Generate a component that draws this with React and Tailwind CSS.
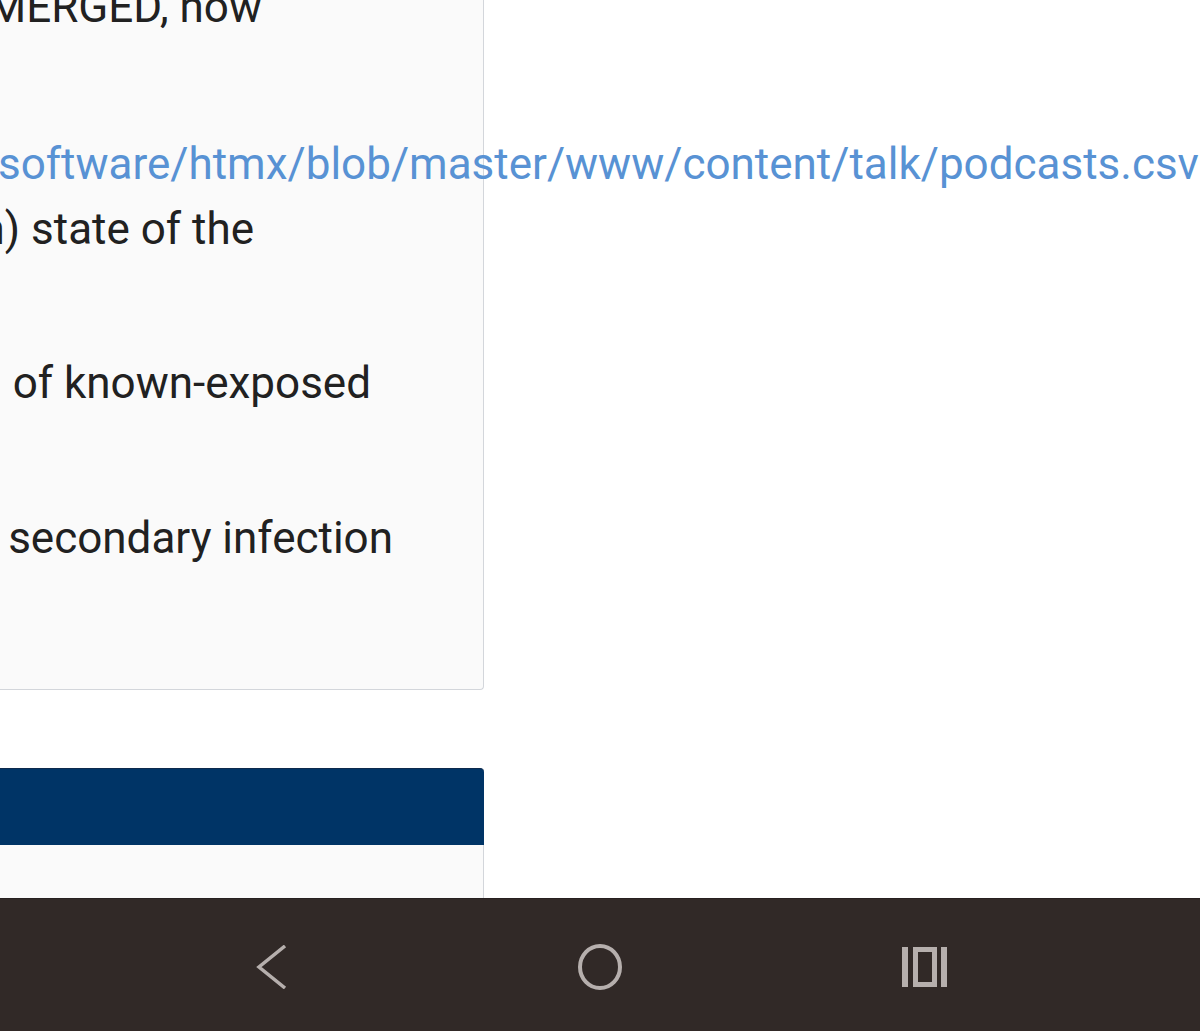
const TextLine = ({ right, top, children, className = "" }) => (
  <div className={`flex justify-end whitespace-nowrap ${className}`} style={{ width: right, marginTop: top }}>
    <span>{children}</span>
  </div>
);

const App = () => {
  return (
    <div className="flex h-[1031px] w-[1200px] flex-col overflow-hidden bg-white font-['Roboto',sans-serif] text-[44px] leading-[64px] text-[#212121]">
      <div className="flex flex-1 flex-col">
        <div className="h-[690px] w-[484px] rounded-br-[4px] border-r border-b border-[#d3d6db] bg-[#fafafa]">
          <TextLine right={262} top={-25}>
            MERGED, now
          </TextLine>
          <div className="-ml-[2px] mt-[93px] whitespace-nowrap text-[#5892d4]">
            software/htmx/blob/master/www/content/talk/podcasts.csv
          </div>
          <TextLine right={254} top={1}>
            n) state of the
          </TextLine>
          <TextLine right={371} top={90}>
            of known-exposed
          </TextLine>
          <TextLine right={393} top={91}>
            secondary infection
          </TextLine>
        </div>

        <div className="mt-[78px] h-[77px] w-[484px] rounded-tr-[4px] border-t border-[#0d2a4d] bg-[#003466]" />
        <div className="w-[484px] flex-1 border-r border-[#d3d6db] bg-[#fafafa]" />
      </div>

      <div className="flex h-[133px] items-center border-t border-[#272020] bg-[#312927] pt-[3px]">
        <svg className="ml-[256px]" width="32" height="44" viewBox="0 0 32 44" fill="none">
          <polyline points="29,1 3,22 29,43" stroke="#b6afad" strokeWidth="3.5" />
        </svg>
        <svg className="ml-[289px]" width="46" height="46" viewBox="0 0 46 46" fill="none">
          <ellipse cx="23" cy="23" rx="20" ry="21" stroke="#b6afad" strokeWidth="4" />
        </svg>
        <svg className="ml-[279px]" width="46" height="40" viewBox="0 0 46 40" fill="none">
          <rect x="0" y="0" width="6" height="40" fill="#b6afad" />
          <rect x="13.5" y="2.5" width="19" height="35" stroke="#b6afad" strokeWidth="5" />
          <rect x="39" y="0" width="6" height="40" fill="#b6afad" />
        </svg>
      </div>
    </div>
  );
};

export default App;
